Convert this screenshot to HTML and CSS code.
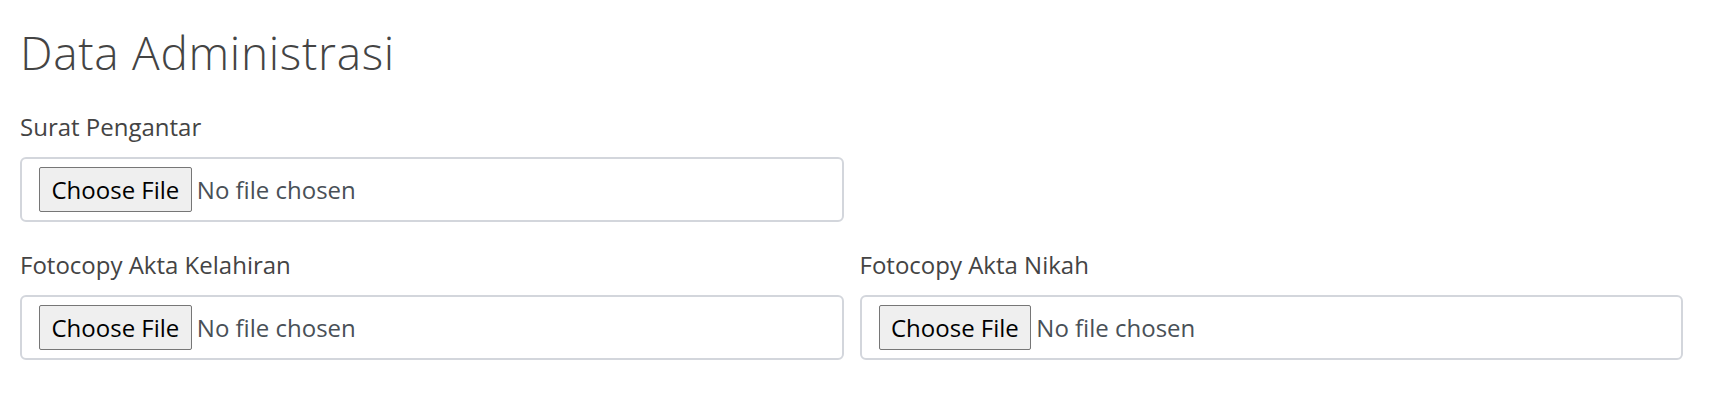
FILE: index.html
```html
<!DOCTYPE html>
<html lang="id">
<head>
<meta charset="utf-8">
<title>Data Administrasi</title>
<link rel="stylesheet" href="styles.css">
</head>
<body>
<div class="page">
  <h2 class="title">Data Administrasi</h2>
  <div class="grid">
    <div class="field">
      <label class="label" for="surat">Surat Pengantar</label>
      <div class="control"><input class="file" type="file" id="surat"></div>
    </div>
    <div class="empty"></div>
    <div class="field">
      <label class="label" for="akta-lahir">Fotocopy Akta Kelahiran</label>
      <div class="control"><input class="file" type="file" id="akta-lahir"></div>
    </div>
    <div class="field">
      <label class="label" for="akta-nikah">Fotocopy Akta Nikah</label>
      <div class="control"><input class="file" type="file" id="akta-nikah"></div>
    </div>
  </div>
</div>
</body>
</html>
```

FILE: styles.css
```css
html, body {
  margin: 0;
  background: #ffffff;
}
body {
  font-family: "Open Sans", "Liberation Sans", sans-serif;
  color: #444444;
}
.page {
  width: 1663px;
  padding: 25px 0 0 20px;
}
.title {
  margin: 0 0 28.5px 0;
  font-size: 46px;
  line-height: 1.2;
  font-weight: 300;
  letter-spacing: 0.7px;
  color: #444444;
}
.grid {
  display: grid;
  grid-template-columns: 1fr 1fr;
  column-gap: 16px;
  row-gap: 25px;
}
.field {
  display: flex;
  flex-direction: column;
}
.label {
  font-size: 24px;
  line-height: 1.5;
  margin-bottom: 12px;
  color: #444444;
}
.control {
  box-sizing: border-box;
  height: 65px;
  border: 2px solid #d3d6dc;
  border-radius: 6px;
  padding: 8px 17px;
  display: flex;
  align-items: center;
}
.file {
  font-family: "Open Sans", "Liberation Sans", sans-serif;
  font-size: 24px;
  color: #495057;
  padding: 0;
  margin: 0;
}
.file::file-selector-button {
  font-family: inherit;
  font-size: 24px;
  line-height: 31px;
  color: #000000;
  background: #efefef;
  border: 1px solid #767676;
  border-radius: 2px;
  padding: 6px 11.5px;
  margin: 0 5px 0 0;
}
```
